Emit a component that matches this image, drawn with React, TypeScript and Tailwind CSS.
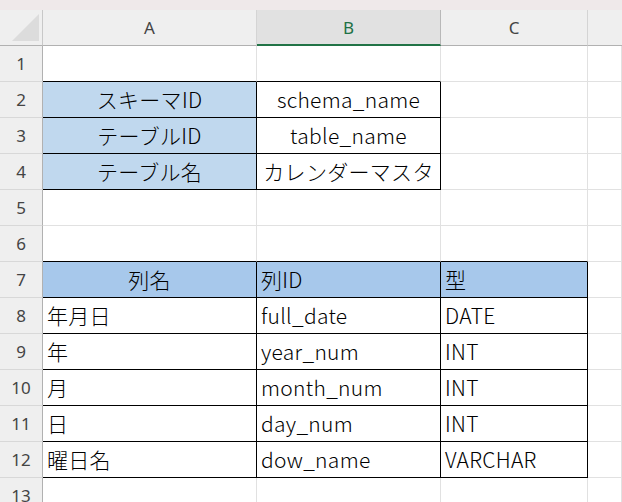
import React from "react";

const FONT = { fontFamily: '"Noto Sans CJK JP", "Noto Sans", sans-serif' };
const HFONT = { fontFamily: '"Noto Sans", "Open Sans", sans-serif' };

type C = {
  t?: string;
  bg?: string;
  align?: "c" | "l";
  br?: boolean;
  bb?: boolean;
};

const W = ["w-[214px]", "w-[184px]", "w-[147px]", "w-[34px]"];

function Cell({ c, i }: { c: C; i: number }) {
  const cls = [
    "h-[36px] shrink-0 border-r border-b flex items-center overflow-hidden whitespace-nowrap text-[21px] font-light text-black leading-none tracking-[0.3px]",
    W[i],
    c.bg === "b1" ? "bg-[#c0d8ee]" : c.bg === "b2" ? "bg-[#a7c8eb]" : "bg-white",
    c.br ? "border-r-black" : "border-r-[#e1e1e1]",
    c.bb ? "border-b-black" : "border-b-[#e1e1e1]",
    c.align === "c" ? "justify-center" : "justify-start pl-[4px]",
  ].join(" ");
  return (
    <div className={cls} style={FONT}>
      {c.t}
    </div>
  );
}

const rows: C[][] = [
  [{ bb: true }, { bb: true }, {}, {}],
  [
    { t: "スキーマID", bg: "b1", align: "c", br: true, bb: true },
    { t: "schema_name", align: "c", br: true, bb: true },
    {},
    {},
  ],
  [
    { t: "テーブルID", bg: "b1", align: "c", br: true, bb: true },
    { t: "table_name", align: "c", br: true, bb: true },
    {},
    {},
  ],
  [
    { t: "テーブル名", bg: "b1", align: "c", br: true, bb: true },
    { t: "カレンダーマスタ", align: "c", br: true, bb: true },
    {},
    {},
  ],
  [{}, {}, {}, {}],
  [{ bb: true }, { bb: true }, { bb: true }, {}],
  [
    { t: "列名", bg: "b2", align: "c", br: true, bb: true },
    { t: "列ID", bg: "b2", br: true, bb: true },
    { t: "型", bg: "b2", br: true, bb: true },
    {},
  ],
  [
    { t: "年月日", br: true, bb: true },
    { t: "full_date", br: true, bb: true },
    { t: "DATE", br: true, bb: true },
    {},
  ],
  [
    { t: "年", br: true, bb: true },
    { t: "year_num", br: true, bb: true },
    { t: "INT", br: true, bb: true },
    {},
  ],
  [
    { t: "月", br: true, bb: true },
    { t: "month_num", br: true, bb: true },
    { t: "INT", br: true, bb: true },
    {},
  ],
  [
    { t: "日", br: true, bb: true },
    { t: "day_num", br: true, bb: true },
    { t: "INT", br: true, bb: true },
    {},
  ],
  [
    { t: "曜日名", br: true, bb: true },
    { t: "dow_name", br: true, bb: true },
    { t: "VARCHAR", br: true, bb: true },
    {},
  ],
  [{}, {}, {}, {}],
];

export default function App() {
  return (
    <div className="w-[622px] h-[502px] overflow-hidden bg-white">
      <div className="h-[10px] bg-[#efe9ea]" />
      <div className="flex h-[36px]" style={HFONT}>
        <div className="relative w-[43px] shrink-0 h-[36px] bg-[#efefef] border-r border-b border-r-[#c8c8c8] border-b-[#b1b1b1]">
          <svg className="absolute left-0 top-0" width="43" height="36" viewBox="0 0 43 36">
            <polygon points="39,4 39,31 12,31" fill="#dcdcdc" />
          </svg>
        </div>
        <div className="w-[214px] shrink-0 h-[36px] bg-[#efefef] border-r border-b border-r-[#d4d4d4] border-b-[#b1b1b1] flex items-center justify-center text-[17px] text-[#444]">
          A
        </div>
        <div className="w-[184px] shrink-0 h-[36px] bg-[#e1e1e1] border-r border-b-2 border-r-[#b8b8b8] border-b-[#217346] flex items-center justify-center text-[17px] text-[#1e7145] pt-[1px]">
          B
        </div>
        <div className="w-[147px] shrink-0 h-[36px] bg-[#efefef] border-r border-b border-r-[#d4d4d4] border-b-[#b1b1b1] flex items-center justify-center text-[17px] text-[#444]">
          C
        </div>
        <div className="w-[34px] shrink-0 h-[36px] bg-[#efefef] border-b border-b-[#b1b1b1]" />
      </div>
      {rows.map((r, ri) => (
        <div key={ri} className="flex h-[36px]">
          <div
            className="w-[43px] shrink-0 h-[36px] bg-[#efefef] border-r border-b border-r-[#b1b1b1] border-b-[#d8d8d8] flex items-center justify-center text-[17px] text-[#444]"
            style={HFONT}
          >
            {ri + 1}
          </div>
          {r.map((c, i) => (
            <Cell key={i} c={c} i={i} />
          ))}
        </div>
      ))}
    </div>
  );
}
